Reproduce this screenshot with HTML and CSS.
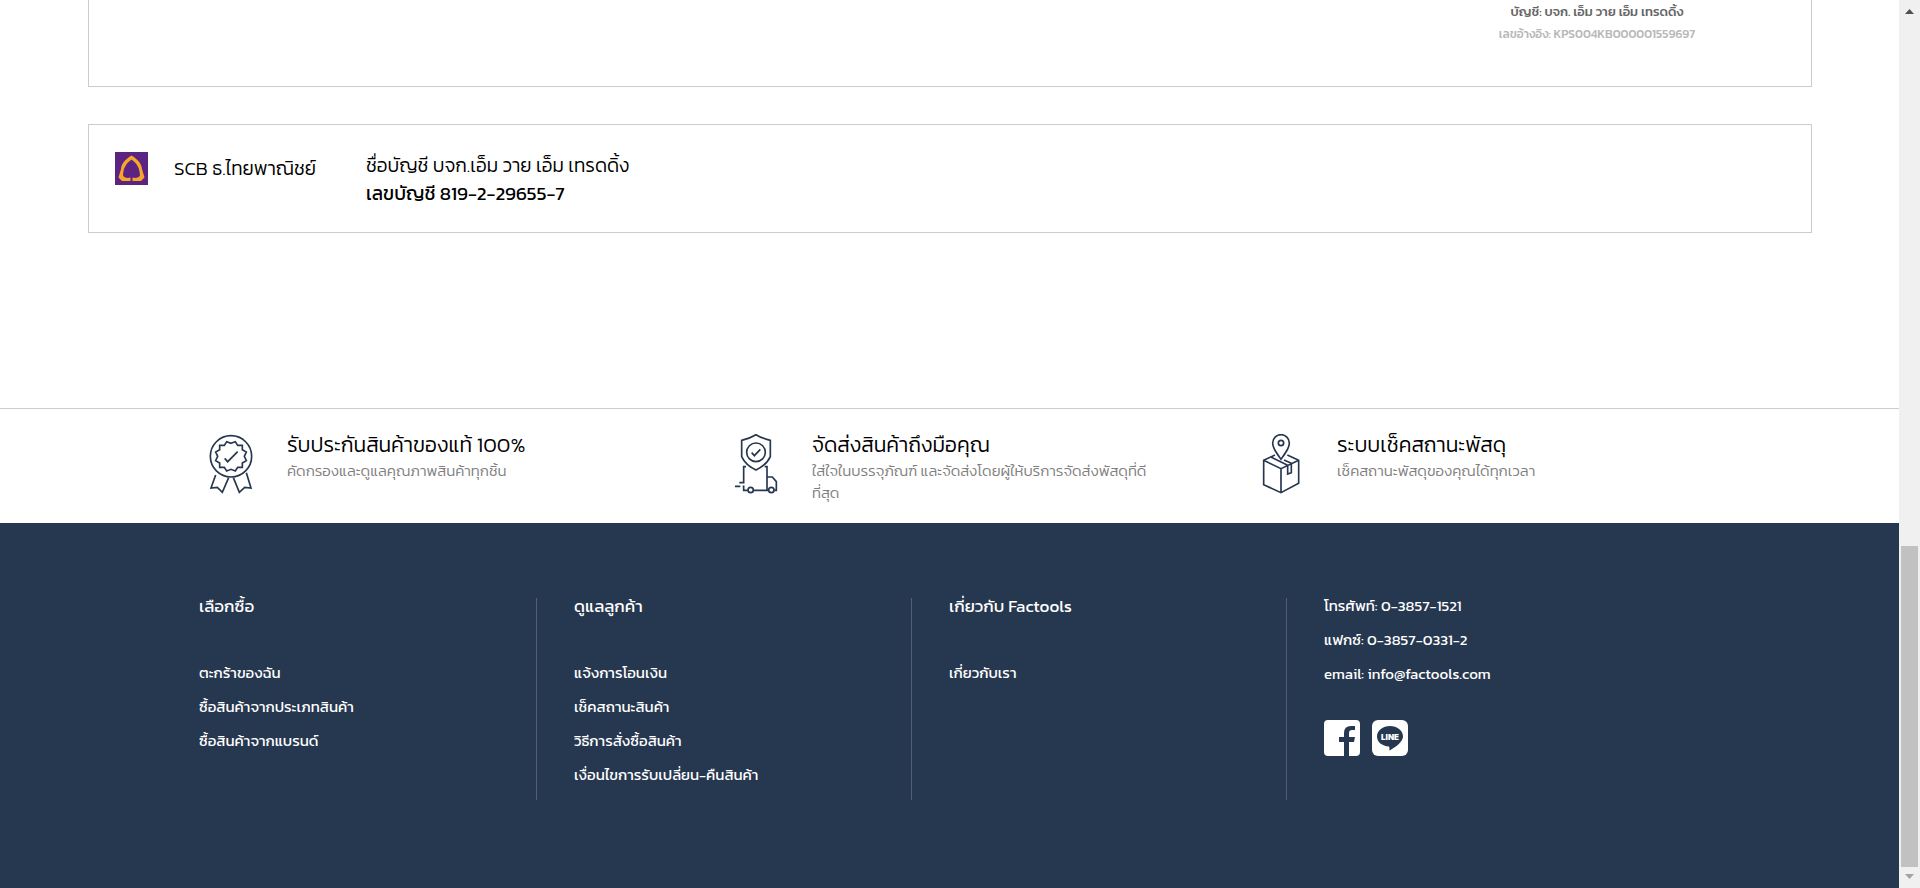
FILE: index.html
```html
<!DOCTYPE html>
<html lang="th">
<head>
<meta charset="utf-8">
<title>Factools</title>
<link rel="stylesheet" href="styles.css">
</head>
<body>
<div class="page">
  <main class="accounts">
    <section class="card card-qr">
      <div class="qr-caption">
        <p class="qr-name">บัญชี: บจก. เอ็ม วาย เอ็ม เทรดดิ้ง</p>
        <p class="qr-ref">เลขอ้างอิง: KPS004KB000001559697</p>
      </div>
    </section>
    <section class="card card-bank">
      <svg class="bank-logo" viewBox="0 0 33 33" role="img" aria-label="SCB">
        <rect width="33" height="33" fill="#5b2482"/>
        <path d="M16.500 3.500C11 7 6.500 11 6 17L3.500 25.500L7 29H15.500V25.500C12 26.500 9 25.500 8 23.500C8.500 16 10.500 12 16.500 7.500C22.500 12 24.500 16 25 23.500C24 25.500 21 26.500 17.500 25.500V29H26L29.500 25.500L27 17C26.500 11 22 7 16.500 3.500Z" fill="#f8a62a"/>
      </svg>
      <p class="bank-name">SCB ธ.ไทยพาณิชย์</p>
      <div class="bank-detail">
        <p>ชื่อบัญชี บจก.เอ็ม วาย เอ็ม เทรดดิ้ง</p>
        <p class="bank-number">เลขบัญชี 819-2-29655-7</p>
      </div>
    </section>
  </main>

  <section class="features">
    <div class="container feature-list">
      <article class="feature">
        <svg class="feature-icon" viewBox="66 102 174 180" aria-hidden="true">
          <circle cx="153" cy="169" r="62"/>
          <path d="M153 130L166 125L173 136L187 136L187 149L199 156L193 169L199 182L187 189L187 202L173 202L166 213L153 208L140 213L133 202L119 202L119 189L107 182L113 169L107 156L119 149L119 136L133 136L140 125Z"/>
          <path d="M134 175L143 185L173 155M107 225L93 264L112 262L127 277L146 233M199 218L213 264L194 262L178 277L160 233"/>
        </svg>
        <div>
          <h2 class="feature-title">รับประกันสินค้าของแท้ 100%</h2>
          <p class="feature-text">คัดกรองและดูแลคุณภาพสินค้าทุกชิ้น</p>
        </div>
      </article>
      <article class="feature">
        <svg class="feature-icon" viewBox="81 102 174 180" aria-hidden="true">
          <path d="M168 104Q150 115 125 121V170Q136 195 168 210Q200 195 211 170V121Q186 115 168 104Z"/>
          <circle cx="168" cy="157" r="28"/>
          <path d="M155 158L163 167L181 148M138 200H131V248H118M105 259H121M128 259H131V271H143M161 271H205M194 200H201V271M201 231H217L229 245V271H223"/>
          <circle cx="152" cy="270" r="8"/>
          <circle cx="214" cy="270" r="8"/>
        </svg>
        <div>
          <h2 class="feature-title">จัดส่งสินค้าถึงมือคุณ</h2>
          <p class="feature-text">ใส่ใจในบรรจุภัณฑ์ และจัดส่งโดยผู้ให้บริการจัดส่งพัสดุที่ดีที่สุด</p>
        </div>
      </article>
      <article class="feature">
        <svg class="feature-icon" viewBox="66 102 174 180" aria-hidden="true">
          <path d="M153 178C135 152 128 142 128 129A25 25 0 0 1 178 129C178 142 171 152 153 178Z"/>
          <circle cx="153" cy="129" r="8"/>
          <path d="M135 165L101 181V254L153 278L206 250V181L172 165M101 181L153 206L206 181M153 206V278M124 172L173 196V222L184 218V190L162 180"/>
        </svg>
        <div>
          <h2 class="feature-title">ระบบเช็คสถานะพัสดุ</h2>
          <p class="feature-text">เช็คสถานะพัสดุของคุณได้ทุกเวลา</p>
        </div>
      </article>
    </div>
  </section>

  <footer class="footer">
    <div class="container footer-columns">
      <nav class="footer-column" aria-labelledby="shop">
        <h2 class="footer-title" id="shop">เลือกซื้อ</h2>
        <ul class="footer-links">
          <li><a href="#">ตะกร้าของฉัน</a></li>
          <li><a href="#">ซื้อสินค้าจากประเภทสินค้า</a></li>
          <li><a href="#">ซื้อสินค้าจากแบรนด์</a></li>
        </ul>
      </nav>
      <nav class="footer-column" aria-labelledby="care">
        <h2 class="footer-title" id="care">ดูแลลูกค้า</h2>
        <ul class="footer-links">
          <li><a href="#">แจ้งการโอนเงิน</a></li>
          <li><a href="#">เช็คสถานะสินค้า</a></li>
          <li><a href="#">วิธีการสั่งซื้อสินค้า</a></li>
          <li><a href="#">เงื่อนไขการรับเปลี่ยน-คืนสินค้า</a></li>
        </ul>
      </nav>
      <nav class="footer-column" aria-labelledby="about">
        <h2 class="footer-title" id="about">เกี่ยวกับ Factools</h2>
        <ul class="footer-links">
          <li><a href="#">เกี่ยวกับเรา</a></li>
        </ul>
      </nav>
      <div class="footer-column">
        <ul class="footer-links">
          <li>โทรศัพท์: 0-3857-1521</li>
          <li>แฟกซ์: 0-3857-0331-2</li>
          <li>email: <a href="#">info@factools.com</a></li>
        </ul>
        <div class="social">
          <a href="#" aria-label="Facebook">
            <svg class="social-icon" viewBox="0 0 36 36" aria-hidden="true">
              <path d="M4 0H32Q36 0 36 4V32Q36 36 32 36H25V22H30L31 17H25V13Q25 10 28 10H31V6H27Q20 6 20 13V17H15V22H20V36H4Q0 36 0 32V4Q0 0 4 0Z" fill="#fff"/>
            </svg>
          </a>
          <a href="#" aria-label="LINE">
            <svg class="social-icon" viewBox="0 0 36 36" aria-hidden="true">
              <rect width="36" height="36" rx="6" fill="#fff"/>
              <path d="M18 6C25 6 31 10.500 31 16.500C31 22 23 27.500 17.500 30.500C17 30 18 28 17 26.500C10 26 5 22 5 16.500C5 10.500 11 6 18 6Z" fill="#263750"/>
              <text class="line-word" x="18" y="20" text-anchor="middle">LINE</text>
            </svg>
          </a>
        </div>
      </div>
    </div>
  </footer>
</div>
<div class="scrollbar" aria-hidden="true">
  <svg class="arrow" viewBox="0 0 21 21"><path d="M6 14L10.500 9L15 14Z" fill="#505050"/></svg>
  <div class="track"><div class="thumb"></div></div>
  <svg class="arrow" viewBox="0 0 21 21"><path d="M6 7L10.500 12L15 7Z" fill="#a3a3a3"/></svg>
</div>
</body>
</html>
```
FILE: styles.css
```css
* {
  box-sizing: border-box;
}

body {
  margin: 0;
  display: flex;
  min-height: 100vh;
  background: #fff;
  color: #000;
  font-family: "Kanit", "Noto Sans Thai", "Noto Sans", sans-serif;
  font-size: 19px;
  font-weight: 300;
  line-height: 28px;
}

h2,
p,
ul {
  margin: 0;
  padding: 0;
}

a {
  color: inherit;
  text-decoration: none;
}

.page {
  flex: 1;
  min-width: 0;
  display: flex;
  flex-direction: column;
}

.accounts {
  padding: 0 87px 175px 88px;
}

.card {
  border: 1px solid #ccc;
}

.card-qr {
  display: flex;
  justify-content: flex-end;
  border-top: 0;
  padding: 0 72px 40px 0;
}

.qr-caption {
  width: 284px;
  text-align: center;
  font-size: 13px;
  font-weight: 500;
  line-height: 23px;
}

.qr-name {
  color: #666;
}

.qr-ref {
  color: #b8b8b8;
  font-size: 12px;
}

.card-bank {
  display: flex;
  align-items: flex-start;
  margin-top: 37px;
  padding: 27px 26px 24px;
}

.bank-logo {
  width: 33px;
  height: 33px;
}

.bank-name {
  width: 192px;
  margin-left: 26px;
  margin-top: 3px;
}

.bank-number {
  font-weight: 400;
}

.container {
  width: 100%;
  max-width: 1575px;
  margin: 0 auto;
}

.features {
  border-top: 1px solid #ccc;
  padding: 20px 0 19px;
}

.feature-list {
  display: grid;
  grid-template-columns: repeat(3, 1fr);
}

.feature {
  display: flex;
  gap: 27px;
  min-height: 74px;
  padding: 0 60px 0 40px;
}

.feature-icon {
  flex: none;
  width: 58px;
  height: 60px;
  margin-top: 5px;
  fill: none;
  stroke: #263750;
  stroke-width: 5;
}

.feature-title {
  font-size: 21px;
  font-weight: 300;
  line-height: 31px;
}

.feature-text {
  color: #808080;
  font-size: 15px;
  line-height: 22px;
}

.footer {
  flex: 1;
  padding: 75px 0;
  background: #263750;
  color: #fff;
  font-weight: 400;
}

.footer-columns {
  display: flex;
}

.footer-column {
  width: 375px;
  min-height: 202px;
  padding-left: 37px;
  border-right: 1px solid #515f73;
}

.footer-column:last-child {
  border-right: 0;
}

.footer-title {
  margin-bottom: 51px;
  font-size: 17px;
  font-weight: 400;
  line-height: 16px;
}

.footer-links {
  display: grid;
  gap: 18px;
  list-style: none;
  font-size: 15px;
  line-height: 16px;
}

.social {
  display: flex;
  gap: 12px;
  margin-top: 38px;
}

.social-icon {
  display: block;
  width: 36px;
  height: 36px;
}

.line-word {
  fill: #fff;
  font-family: "Inter", sans-serif;
  font-size: 8px;
  font-weight: 900;
}

.scrollbar {
  display: flex;
  flex-direction: column;
  width: 21px;
  background: #f0f0f0;
}

.arrow {
  width: 21px;
  height: 21px;
}

.track {
  flex: 1;
  display: flex;
  align-items: flex-end;
  padding: 0 2px;
}

.thumb {
  width: 100%;
  height: 38%;
  background: #c1c1c1;
}
```
